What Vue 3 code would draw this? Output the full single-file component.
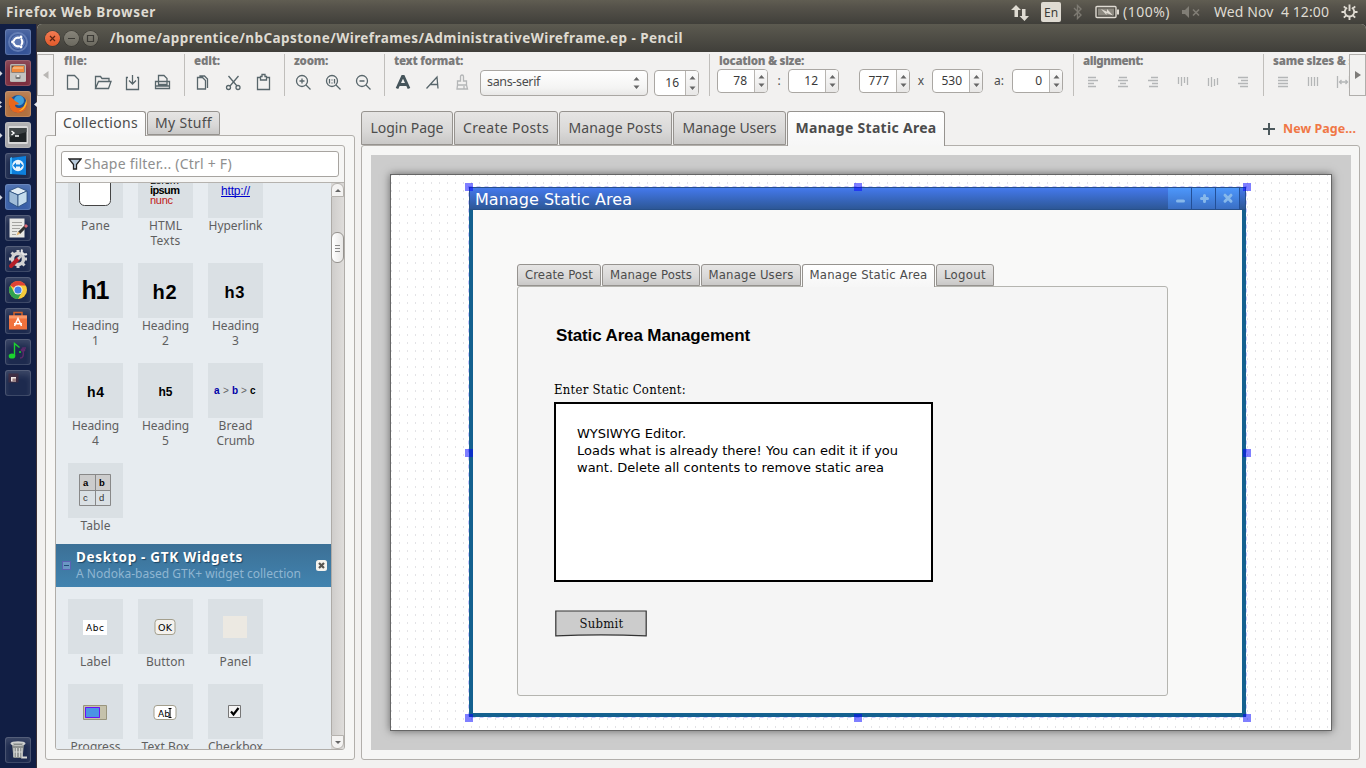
<script setup>
const vFit = {
  mounted(el, { value }) {
    if (!value) return
    const n = el.textContent.length
    if (n < 2) return
    const w = el.getBoundingClientRect().width
    el.style.letterSpacing = ((value - w) / n).toFixed(3) + 'px'
  },
}

const pageTabs = [
  { t: 'Login Page', w: 92, f: 73 },
  { t: 'Create Posts', w: 104, f: 86 },
  { t: 'Manage Posts', w: 113, f: 94 },
  { t: 'Manage Users', w: 113, f: 94 },
  { t: 'Manage Static Area', w: 158, f: 141, on: true },
]
const wireTabs = [
  { t: 'Create Post', w: 84, f: 68 },
  { t: 'Manage Posts', w: 98, f: 82 },
  { t: 'Manage Users', w: 100, f: 85 },
  { t: 'Manage Static Area', w: 133, f: 118, on: true },
  { t: 'Logout', w: 58, f: 42 },
]
const shapesA = [
  { k: 'pane', l: [['Pane', 29]] },
  { k: 'html', l: [['HTML', 33], ['Texts', 30]] },
  { k: 'link', l: [['Hyperlink', 54]] },
  { k: 'h', t: 'h1', s: 25, y: 36, w: 28, l: [['Heading', 47], ['1']] },
  { k: 'h', t: 'h2', s: 20, y: 36, w: 24, x: 26.5, l: [['Heading', 47], ['2']] },
  { k: 'h', t: 'h3', s: 16.5, y: 35, w: 20, x: 26.5, l: [['Heading', 47], ['3']] },
  { k: 'h', t: 'h4', s: 14, y: 34, w: 17, l: [['Heading', 47], ['4']] },
  { k: 'h', t: 'h5', s: 12, y: 33, w: 14, l: [['Heading', 47], ['5']] },
  { k: 'crumb', l: [['Bread', 34], ['Crumb', 38]] },
  { k: 'table', l: [['Table', 30]] },
]
const shapesB = [
  { k: 'label', l: [['Label', 31]] },
  { k: 'button', l: [['Button', 39]] },
  { k: 'panel', l: [['Panel', 32]] },
  { k: 'progress', l: [['Progress', 50]] },
  { k: 'textbox', l: [['Text Box', 48]] },
  { k: 'checkbox', l: [['Checkbox', 55]] },
]
const sections = [
  { id: 'a', items: shapesA },
  { id: 'b', items: shapesB },
]
const apps = [
  { k: 'dash', c: 'blue' },
  { k: 'files', c: 'red', run: 1 },
  { k: 'firefox', c: 'orange', run: 2, focus: true },
  { k: 'term', c: 'grey', run: 1 },
  { k: 'viewer', c: 'dark' },
  { k: 'cube', c: 'mid', run: 1 },
  { k: 'edit', c: 'dark' },
  { k: 'tools', c: 'dark' },
  { k: 'chrome', c: 'dark' },
  { k: 'store', c: 'dark' },
  { k: 'music', c: 'dark' },
  { k: 'space', c: 'dark' },
]
const fileIcons = [
  'M4.500 3.500h7l4 4v9.500h-11z',
  'M2.500 16.500V4.500h5l1.500 2h7v3M2.500 16.500l3-7h12.500l-2.500 7z',
  'M5 5.500H3.500v12h12v-12H14M9.500 3v8.500M6 8.500l3.500 3.500 3.500-3.500',
  'M5.500 9V3.500h5.500l3 3V9M5.500 9.500H2.500v7h14v-7h-2.500M5.500 9.500h8.500v3h-8.500zM2.500 14h14',
]
const editIcons = [
  'M4.500 5.500h5l3 3v8.500h-8zM7 5V4h4.500l3 3v9',
  'M5.500 4l8.500 10M15.500 4l-8.500 10M3.500 15.500a2 2 0 1 0 4 0a2 2 0 1 0-4 0M13 15.500a2 2 0 1 0 4 0a2 2 0 1 0-4 0',
  'M7 5.500H4.500v12h12v-12H14M7.500 8V4.500h1.500v-2h3v2h1.500V8z',
]
const alignIcons = [
  'M5 5.500h8M5 8.500h10M5 11.500h6M5 14.500h8',
  'M6 5.500h8M5 8.500h10M7 11.500h6M5 14.500h10',
  'M8 5.500h7M5 8.500h10M9 11.500h6M6 14.500h9',
  'M5.500 5v7M8.500 5v9M11.500 5v6M14.500 5v8',
  'M5.500 6v8M8.500 5v10M11.500 7v7M14.500 6v7',
  'M5 5.500h10M8 8.500h7M5 11.500h10M7 14.500h8',
]
</script>

<template>
  <div class="screen">
    <header class="menubar">
      <b v-fit="150">Firefox Web Browser</b>
      <svg class="net" width="18" height="18" viewBox="0 0 18 18"><path fill="#dfdbd2" d="M5 1l5 5H7v7H3.500V6H0zM13.500 17l-5-5H11V5h3.500v7H18z" /></svg>
      <span class="lang"><i v-fit="14">En</i></span>
      <svg class="bt" width="10" height="16" viewBox="0 0 10 16"><path fill="none" stroke="#7d7a72" stroke-width="1.400" d="M1 4l7 7-3.500 3.500v-13L8 5 1 12" /></svg>
      <svg class="bat" width="25" height="14" viewBox="0 0 25 14">
        <rect x="1" y="1.500" width="20" height="11" rx="1" fill="none" stroke="#dfdbd2" stroke-width="1.400" />
        <path fill="#8c8980" d="M3 3.500h16v7H3z" /><path fill="#dfdbd2" d="M22 4.500h2v5h-2zM6 4l6 2.800V4l6 6.500-6.500-2.500v2z" />
      </svg>
      <span class="pct" v-fit="47">(100%)</span>
      <svg class="vol" width="18" height="12" viewBox="0 0 18 12"><path fill="#817e76" d="M0 4h3l4-4v12L3 8H0z" /><path stroke="#817e76" stroke-width="1.600" d="M11 3.500l6 6M17 3.500l-6 6" /></svg>
      <span class="clock" v-fit="115">Wed Nov&nbsp; 4 12:00</span>
      <svg class="gear" width="17" height="18" viewBox="-9 -9 18 18">
        <path fill="none" stroke="#dfdbd2" stroke-width="2" d="M-2.500-4.500A5 5 0 1 0 2.500-4.500M0-8v7" />
        <path stroke="#dfdbd2" stroke-width="2" d="M5 0h3.500M-5 0h-3.500M0 5v3.500M3.500 3.500l2.500 2.500M-3.500 3.500L-6 6M3.800-3.800L6-6M-3.800-3.800L-6-6" />
      </svg>
    </header>

    <div class="desk">
      <nav class="launcher">
        <div v-for="a in apps" :key="a.k" class="app" :class="a.c">
          <svg v-if="a.run" class="run" width="3" height="7"><path v-if="a.run === 1" fill="#d5d9e2" d="M0 1l2.500 2.500L0 6z" /><path v-else fill="#d5d9e2" d="M0 0l2 1.500L0 3zM0 4l2 1.500L0 7z" /></svg>
          <svg v-if="a.focus" class="focus" width="3" height="7"><path fill="#e6e8ee" d="M3 1L0 3.500 3 6z" /></svg>
          <svg width="26" height="26" viewBox="0 0 26 26">
            <g v-if="a.k === 'dash'" fill="none">
              <circle cx="13" cy="13" r="9" stroke="#7d95c6" stroke-width="2" opacity=".6" /><circle cx="13" cy="13" r="7" fill="#5d78b3" />
              <circle cx="13" cy="13" r="4.300" stroke="#fff" stroke-width="2.200" />
              <path stroke="#5d78b3" stroke-width="1.200" d="M13 13L6 13M13 13l4-6M13 13l4 6" /><g fill="#fff"><circle cx="7.500" cy="13" r="1.400" /><circle cx="16" cy="8" r="1.400" /><circle cx="16" cy="18" r="1.400" /></g>
            </g>
            <g v-else-if="a.k === 'files'">
              <rect x="5" y="4" width="16" height="18" rx="1.500" fill="#b9b7b3" /><path fill="#6a4a3a" d="M6.500 5.500h13v7h-13z" /><path fill="#f08a3c" d="M7 8l2-2h10v6H7z" /><path fill="#f8d7a8" d="M8 7.500h10v1H8z" /><path fill="#c4c3c0" d="M5 13h16v8H5z" /><rect x="10.500" y="15" width="5" height="4" rx="1" fill="#777" /><path fill="#e8e8e6" d="M11.500 15h3v2h-3z" />
            </g>
            <g v-else-if="a.k === 'firefox'">
              <circle cx="13" cy="13" r="9" fill="#1b5298" /><circle cx="14" cy="9.500" r="5" fill="#3f9fd8" /><path fill="#e9661c" d="M5 6C2 13 5 22 13 22c6 0 10-5 9-12-2 5-4 7-8 7-3 0-4-2-4-3l4-1c-1-2-3-2-5-4 0-1-2-2-4-3z" /><path fill="#f9b82b" d="M21.500 8c1 6-2 12-8 12 3-1 6-4 8-12z" />
            </g>
            <g v-else-if="a.k === 'term'">
              <rect x="3" y="4" width="20" height="18" rx="1.500" fill="#d8d8d8" /><path fill="#1f2426" d="M4.500 6h17v14h-17z" /><path fill="#3e4446" d="M4.500 6h17v4l-17 5z" /><path fill="none" stroke="#fff" stroke-width="1.400" d="M6.500 9l2.500 2-2.500 2M10 14h4" />
            </g>
            <g v-else-if="a.k === 'viewer'">
              <path fill="#0d7fdc" d="M5 5l16-2v19L5 21z" /><path fill="#41b2f7" d="M5 5l2-1v17H5z" /><circle cx="13" cy="12.500" r="5.800" fill="#e9f4fc" /><path fill="#0d7fdc" d="M8 12.500l3-3v2h4v-2l3 3-3 3v-2h-4v2z" />
            </g>
            <g v-else-if="a.k === 'cube'" stroke="#264a78" stroke-width=".8">
              <path fill="#e2edf5" d="M4 7l9-4 9 4-9 4z" /><path fill="#9fbcd8" d="M4 7l9 4v12l-9-5z" /><path fill="#c4dced" d="M22 7l-9 4v12l9-5z" />
            </g>
            <g v-else-if="a.k === 'edit'">
              <path fill="#e9e9e5" d="M4.500 3.500h15v19h-15z" /><path stroke="#a4a4a0" d="M7 7.500h10M7 10.500h10M7 13.500h8M7 16.500h5M7 19.500h4" /><path stroke="#333" stroke-width="3" d="M21 11l-7 7" /><path fill="#e3b26c" d="M15.500 18.500L11.500 20.500l1.500-4z" /><path stroke="#dc6a76" stroke-width="3" d="M20 12l2-2" />
            </g>
            <g v-else-if="a.k === 'tools'">
              <circle cx="13" cy="13" r="5.500" fill="none" stroke="#d2d2d2" stroke-width="3.500" /><path stroke="#d2d2d2" stroke-width="3" d="M13 4v3M13 19v3M4 13h3M19 13h3M6.500 6.500l2 2M17.500 17.500l2 2" /><path stroke="#b51f28" stroke-width="4" stroke-linecap="round" d="M6 20l7-7" /><path stroke="#c8c8c8" stroke-width="2.500" d="M13 13l6-6" /><path fill="none" stroke="#e6e6e6" stroke-width="2" d="M17 3.500c-1 4 1 6 5 4.500" />
            </g>
            <g v-else-if="a.k === 'chrome'">
              <circle cx="13" cy="13" r="9" fill="#f7cb3b" /><path fill="#e04335" d="M13 13L5.200 8.500A9 9 0 0 1 20.800 8.500H13z" /><path fill="#31a350" d="M5.200 8.500A9 9 0 0 0 13 22l4-7-8 0z" /><circle cx="13" cy="13" r="4.500" fill="#f4f4f4" /><circle cx="13" cy="13" r="3.500" fill="#437fe8" />
            </g>
            <g v-else-if="a.k === 'store'">
              <path fill="none" stroke="#d46229" stroke-width="1.500" d="M9 9V4.500h8V9" /><path fill="#f1713c" d="M4 7.500h18v14H4z" /><path fill="#f99768" d="M4 7.500h18v3H4z" /><path fill="none" stroke="#fff" stroke-width="1.500" d="M9.500 18L13 10.500l3.500 7.500M9 15.800h8" />
            </g>
            <g v-else-if="a.k === 'music'">
              <path fill="none" stroke="#1bd32f" stroke-width="1.400" d="M9.500 17V4.500l5 4" /><ellipse cx="7" cy="17" rx="3.300" ry="2.600" fill="#1bd32f" /><path fill="none" stroke="#5b2a69" stroke-width="1.500" d="M15 19c3 0 4-2 3-8V9h3" /><ellipse cx="18" cy="11" rx="2.500" ry="1.800" fill="#5b2a69" /><circle cx="15" cy="13" r="1" fill="#1bd32f" />
            </g>
            <g v-else>
              <path fill="#4a2b3a" d="M3.500 3.500h10v9h-10z" opacity=".7" /><path fill="#f1e8e6" d="M6 7h5v4.500H6z" /><path fill="#9b7f80" d="M7.500 8.500H11v3H7.500z" />
            </g>
          </svg>
        </div>
        <div class="app dark trash">
          <svg width="26" height="26" viewBox="0 0 26 26"><path fill="#8d918f" d="M7 8h12l-1.500 13h-9z" /><ellipse cx="13" cy="6.500" rx="7.500" ry="2.300" fill="#cfd1cf" /><path fill="#858a88" d="M8 6.500h10l-1 1.500H9z" /><path stroke="#d5d7d5" stroke-width="1.200" d="M9 11v9M11.500 11v9M14.500 11v9M17 11v9M8.500 15h9" /><path fill="#d8d8d5" d="M17 19.500h5V21.500h-6z" /></svg>
        </div>
      </nav>

      <main class="win">
        <div class="title">
          <span class="wb close"><svg width="15" height="15"><path stroke="#5b2413" stroke-width="1.200" d="M5 5l5 5M10 5l-5 5" /></svg></span>
          <span class="wb"><svg width="15" height="15"><path stroke="#3b3a35" stroke-width="1.200" d="M4 7.500h7" /></svg></span>
          <span class="wb"><svg width="15" height="15"><path fill="none" stroke="#3b3a35" stroke-width="1.200" d="M4.500 4.500h6v6h-6z" /></svg></span>
          <b v-fit="573">/home/apprentice/nbCapstone/Wireframes/AdministrativeWireframe.ep - Pencil</b>
        </div>

        <div class="toolbar">
          <div class="scroller"><svg width="6" height="8"><path fill="#b9b7b4" d="M5.500 0v8L0 4z" /></svg></div>
          <section class="grp g-file">
            <h6><b v-fit="23">file:</b></h6>
            <div class="tools"><svg v-for="d in fileIcons" :key="d" class="ic" viewBox="0 0 20 20"><path :d="d" /></svg></div>
          </section>
          <section class="grp g3">
            <h6><b v-fit="26">edit:</b></h6>
            <div class="tools"><svg v-for="d in editIcons" :key="d" class="ic" viewBox="0 0 20 20"><path :d="d" /></svg></div>
          </section>
          <section class="grp g3">
            <h6><b v-fit="34">zoom:</b></h6>
            <div class="tools">
              <svg class="ic" viewBox="0 0 20 20"><circle cx="9" cy="9" r="5.500" /><path d="M13 13l4.500 4.500M6.500 9h5M9 6.500v5" /></svg>
              <svg class="ic" viewBox="0 0 20 20"><circle cx="9" cy="9" r="5.500" /><path d="M13 13l4.500 4.500M6.500 7v4.500M11.500 7v4.500M9 7.500v1M9 10.500v1" /></svg>
              <svg class="ic" viewBox="0 0 20 20"><circle cx="9" cy="9" r="5.500" /><path d="M13 13l4.500 4.500M6.500 9h5" /></svg>
            </div>
          </section>
          <section class="grp g-text">
            <h6><b v-fit="69">text format:</b></h6>
            <div class="tools">
              <svg class="ic" viewBox="0 0 20 20"><path class="heavy" d="M4 16.500L9.500 4.500h1L16 16.500M6.500 12.500h7" /></svg>
              <svg class="ic" viewBox="0 0 20 20"><path d="M3.500 16.500L14 5l1 11.500M7 12.500h7.500" /></svg>
              <svg class="ic off" viewBox="0 0 20 20"><path d="M7.500 9V4.500a1.500 1.500 0 0 1 3 0V9h3v4h-9V9zM4.500 13l-.500 4h10.500l-1-4M11 14v3" /></svg>
              <div class="combo"><span v-fit="53">sans-serif</span><svg width="7" height="12"><path fill="#666" d="M3.500 0l3 3.500h-6zM3.500 12l3-3.500h-6z" /></svg></div>
              <div class="spin tall"><span>16</span><i><svg width="7" height="14"><path fill="#666" d="M3.500 0l3 3.500h-6zM3.500 14l3-3.500h-6z" /></svg></i></div>
            </div>
          </section>
          <section class="grp g-loc">
            <h6><b v-fit="85">location &amp; size:</b></h6>
            <div class="tools loc">
              <template v-for="(p, i) in [['78', ':'], ['12', ''], ['777', 'x'], ['530', 'a:'], ['0', '']]" :key="i">
                <div class="spin"><span>{{ p[0] }}</span><i><svg width="7" height="12"><path fill="#666" d="M3.500 0l3 3.500h-6zM3.500 12l3-3.500h-6z" /></svg></i></div>
                <span class="sep" :class="'s' + i">{{ p[1] }}</span>
              </template>
            </div>
          </section>
          <section class="grp g-align">
            <h6><b v-fit="60">alignment:</b></h6>
            <div class="tools"><svg v-for="d in alignIcons" :key="d" class="ic off" viewBox="0 0 20 20"><path :d="d" /></svg></div>
          </section>
          <section class="grp g-same">
            <h6><b v-fit="117">same sizes &amp; spaces:</b></h6>
            <div class="tools">
              <svg class="ic off" viewBox="0 0 20 20"><path d="M5 5.500h10M5 8.500h10M5 11.500h10M5 14.500h10" /></svg>
              <svg class="ic off" viewBox="0 0 20 20"><path d="M5.500 5v9M8.500 5v9M11.500 5v9M14.500 5v9" /></svg>
              <svg class="ic off" viewBox="0 0 20 20"><path d="M4.500 4v12M16.500 4v12M6.500 10h8M8.500 8l-2 2 2 2M12.500 8l2 2-2 2" /></svg>
            </div>
          </section>
          <div class="scroller right"><svg width="6" height="8"><path fill="#7e7c79" d="M0 0v8l6-4z" /></svg></div>
        </div>

        <div class="work">
          <aside class="side">
            <div class="tabs st"><div class="tab on"><span v-fit="75">Collections</span></div><div class="tab"><span v-fit="57">My Stuff</span></div></div>
            <div class="panel">
              <div class="lib">
                <div class="search">
                  <svg width="14" height="13" viewBox="0 0 14 13"><path fill="#b9cbdc" stroke="#222" stroke-width="1.300" d="M1 1h12L8.500 6.500V11h-3V6.500z" /></svg>
                  <span v-fit="148">Shape filter... (Ctrl + F)</span>
                </div>
                <div class="scroll">
                  <div class="list">
                    <template v-for="s in sections" :key="s.id">
                      <div v-if="s.id === 'b'" class="head">
                        <svg width="9" height="9"><rect x=".5" y=".5" width="8" height="8" fill="#6a96c4" stroke="#5a62b4" /><path stroke="#1f4f78" d="M2 4.500h5" /></svg>
                        <div><b v-fit="167">Desktop - GTK Widgets</b><small v-fit="225">A Nodoka-based GTK+ widget collection</small></div>
                        <svg width="11" height="11"><rect width="11" height="11" rx="2.500" fill="#f5f3ee" /><path stroke="#565450" stroke-width="2.200" d="M3 3l5 5M8 3L3 8" /></svg>
                      </div>
                      <div class="grid" :class="s.id">
                        <div v-for="(it, i) in s.items" :key="i" class="shape">
                          <svg class="thumb" width="55" height="55" viewBox="0 0 55 55" font-family="Liberation Sans, Arial, sans-serif">
                            <text v-if="it.k === 'h'" :x="it.x || 27.5" :y="it.y" :font-size="it.s" :textLength="it.w" font-weight="700" text-anchor="middle">{{ it.t }}</text>
                            <rect v-else-if="it.k === 'pane'" x="11.500" y="11.500" width="31" height="31" rx="5" fill="#fff" stroke="#444" />
                            <g v-else-if="it.k === 'html'" font-size="11"><text x="12" y="21" textLength="29">Lorem</text><text x="12" y="31" font-weight="700" textLength="30">ipsum</text><text x="12" y="41" fill="#c01818" textLength="23">nunc</text></g>
                            <g v-else-if="it.k === 'link'"><text x="13" y="32" font-size="12" fill="#00c" textLength="29">http://</text><path stroke="#00c" d="M13 33.500h29" /></g>
                            <g v-else-if="it.k === 'crumb'" font-size="10" font-weight="700"><text x="6" y="31" fill="#0000a8">a</text><text x="15" y="31" font-weight="400" fill="#666">&gt;</text><text x="24" y="31" fill="#0000a8">b</text><text x="33" y="31" font-weight="400" fill="#666">&gt;</text><text x="42" y="31">c</text></g>
                            <g v-else-if="it.k === 'table'" font-size="9.500"><path fill="#ccc" d="M11 11h32v16H11z" /><path fill="none" stroke="#888" d="M11.500 11.500h31v31h-31zM27.500 11v32M11 27.500h32" /><g font-weight="700"><text x="15" y="23">a</text><text x="31" y="23">b</text></g><g fill="#333"><text x="15" y="38">c</text><text x="31" y="38">d</text></g></g>
                            <g v-else-if="it.k === 'label'"><path fill="#fff" d="M15 21h24v15H15z" /><text x="18" y="32" font-size="9" font-family="DejaVu Sans, sans-serif" textLength="18">Abc</text></g>
                            <g v-else-if="it.k === 'button'"><rect x="17" y="20.500" width="20" height="15" rx="3" fill="#f4f2ee" stroke="#a39f8d" /><text x="20" y="31.500" font-size="9.500" font-family="DejaVu Sans, sans-serif" textLength="14">OK</text></g>
                            <path v-else-if="it.k === 'panel'" fill="#ece9e2" d="M15 17h24v22H15z" />
                            <g v-else-if="it.k === 'progress'"><path fill="#c5c2ab" stroke="#99957d" d="M15.500 21.500h23v14h-23z" /><path fill="#4a93e4" d="M17 23h15v11H17z" /><path fill="none" stroke="#6a0ff5" d="M17.500 23.500h14v10h-14z" /></g>
                            <g v-else-if="it.k === 'textbox'"><rect x="16" y="21.500" width="22" height="14" rx="3" fill="#fff" stroke="#a39f8d" /><text x="20" y="32.500" font-size="9" font-family="DejaVu Sans, sans-serif" textLength="12">Ab</text><path stroke="#000" fill="none" d="M30.500 24.500h3M32 25v8M30.500 33.500h3" /></g>
                            <g v-else><path fill="#f4f4f4" stroke="#777" d="M20.500 21.500h12v12h-12z" /><path fill="none" stroke="#000" stroke-width="2.200" d="M23 27.500l2.500 3 5-6.500" /></g>
                          </svg>
                          <span v-for="x in it.l" :key="x[0]" class="cap"><i v-fit="x[1]">{{ x[0] }}</i></span>
                        </div>
                      </div>
                    </template>
                  </div>
                  <div class="bar">
                    <span class="arrow up"><svg width="6" height="3"><path fill="#666" d="M3 0l3 3H0z" /></svg></span>
                    <span class="track"><span class="knob"><svg width="5" height="8"><path stroke="#888" d="M0 1.500h5M0 4.500h5M0 7.500h5" /></svg></span></span>
                    <span class="arrow"><svg width="6" height="3"><path fill="#666" d="M3 3l3-3H0z" /></svg></span>
                  </div>
                </div>
              </div>
            </div>
          </aside>

          <section class="doc">
            <div class="tabs dt">
              <div v-for="t in pageTabs" :key="t.t" class="tab" :class="{ on: t.on }" :style="{ width: t.w + 'px' }"><span v-fit="t.f">{{ t.t }}</span></div>
              <div class="new"><svg width="12" height="12"><path stroke="#4c585c" stroke-width="2" d="M6 0v12M0 6h12" /></svg><b v-fit="73">New Page...</b></div>
            </div>
            <div class="panel">
              <div class="canvas">
                <div class="page">
                  <svg class="dots" width="940" height="555">
                    <defs><pattern id="dot" width="8" height="8" patternUnits="userSpaceOnUse"><path fill="#e3e3e6" d="M0 7h1v1H0zM0 0h1v1H0z" /></pattern></defs>
                    <rect width="940" height="555" fill="url(#dot)" />
                  </svg>
                  <div class="frame">
                    <div class="ftitle">
                      <span v-fit="157">Manage Static Area</span>
                      <em><svg width="23" height="21"><path stroke="#87b8ea" stroke-width="3" stroke-linecap="round" d="M9.500 13h6" /></svg></em>
                      <em><svg width="23" height="21"><path stroke="#87b8ea" stroke-width="3" stroke-linecap="round" d="M9.500 10.500h6M12.500 7.500v6" /></svg></em>
                      <em><svg width="23" height="21"><path stroke="#87b8ea" stroke-width="3" stroke-linecap="round" d="M9 7.200l6 6M15 7.200l-6 6" /></svg></em>
                    </div>
                    <div class="fbody">
                      <div class="tabs wt"><div v-for="t in wireTabs" :key="t.t" class="tab" :class="{ on: t.on }" :style="{ width: t.w + 'px' }"><span v-fit="t.f">{{ t.t }}</span></div></div>
                      <div class="form">
                        <h2><span v-fit="194">Static Area Management</span></h2>
                        <label><span v-fit="132">Enter Static Content:</span></label>
                        <div class="editor">
                          <p><span v-fit="109">WYSIWYG Editor.</span></p>
                          <p><span v-fit="321">Loads what is already there! You can edit it if you</span></p>
                          <p><span v-fit="307">want. Delete all contents to remove static area</span></p>
                        </div>
                        <button><svg class="outline" width="93" height="27"><path fill="#ccc" stroke="#333" stroke-width="1.200" d="M.800 1h90.400v24.800Q46 23.800.800 25.800z" /></svg><span v-fit="44">Submit</span></button>
                      </div>
                    </div>
                    <svg class="handles" width="787" height="540">
                      <path fill="none" stroke="#c9c9ff" stroke-dasharray="4 4" d="M4.500 4.500h778v531H4.500z" />
                      <path fill="#00f" fill-opacity=".5" d="M1 1h8v8H1zM390 1h8v8h-8zM779 1h8v8h-8zM1 267h8v8H1zM779 267h8v8h-8zM1 532h8v8H1zM390 532h8v8h-8zM779 532h8v8h-8z" />
                    </svg>
                  </div>
                </div>
              </div>
            </div>
          </section>
        </div>
      </main>
    </div>
  </div>
</template>

<style>
html, body { margin: 0; overflow: hidden; }
</style>

<style scoped>
.screen { width: 1366px; height: 768px; overflow: hidden; display: flex; flex-direction: column; background: #3c3b37; color: #4c4c4c; font-family: "Noto Sans", sans-serif; font-size: 14px; cursor: default; }
.screen * { box-sizing: border-box; }
svg { display: block; flex: none; }
span, b, i, small { white-space: nowrap; }
i { font-style: normal; }
[class] > span, b, i { display: inline-block; }
.menubar { height: 24px; flex: none; display: flex; align-items: center; padding: 0 8px 0 6px; color: #dfdbd2; background: linear-gradient(#605d52, #55524a 30%, #403f3a); }
.menubar b { font-size: 13.500px; }
.pct, .clock { padding-bottom: 2px; }
.net { margin: 2px 12px 0 auto; }
.lang { width: 20px; height: 20px; background: #dfdbd2; border-radius: 2px; color: #3c3b37; text-align: center; line-height: 21px; font-size: 12px; }
.bt { margin-left: 12px; }
.bat { margin-left: 12px; }
.pct { margin-left: 3px; }
.vol { margin-left: 12px; }
.clock { margin-left: 14px; }
.gear { margin-left: 12px; }
.desk { flex: 1; display: flex; min-height: 0; }
.launcher { width: 37px; flex: none; padding: 5px 0 5px 5px; display: flex; flex-direction: column; gap: 5px; background: #111e44; border-right: 1px solid #3b3036; }
.app { position: relative; width: 26px; height: 26px; border-radius: 3px; box-shadow: inset 0 0 0 1px rgba(255,255,255,.14), inset 0 5px 6px rgba(255,255,255,.14); }
.blue { background: #355396; } .red { background: #7c2f3f; } .orange { background: #b1703f; } .grey { background: #a8a8aa; } .mid { background: #3960a8; } .dark { background: #1d2a4e; }
.trash { margin-top: auto; }
.run { position: absolute; left: -5px; top: 10px; }
.focus { position: absolute; left: 29px; top: 10px; }
.win { flex: 1; min-width: 0; display: flex; flex-direction: column; background: #f2f1f0; border-radius: 5px 5px 0 0; overflow: hidden; }
.title { height: 28px; flex: none; display: flex; align-items: center; padding-left: 8px; gap: 4px; color: #dfdbd2; background: linear-gradient(#5c5a50, #403f3a); }
.title b { margin-left: 8px; font-size: 13.500px; }
.wb { width: 15px; height: 15px; border-radius: 50%; background: linear-gradient(#87847a, #6b695f); box-shadow: 0 0 0 .5px #35342f; }
.close { background: linear-gradient(#f37b53, #e25a2a); }
.toolbar { height: 59px; flex: none; display: flex; align-items: flex-start; padding-top: 2px; position: relative; }
.scroller { width: 17px; height: 42px; flex: none; border: 1px solid #b0aeab; display: flex; align-items: center; justify-content: center; background: #f2f1f0; }
.scroller.right { position: absolute; right: 0; top: 2px; }
.grp { height: 42px; flex: none; border-left: 1px solid #c0bebb; overflow: visible; }
.g-file { width: 130px; border: 0; padding-left: 1px; }
.g3 { width: 100px; }
.g-text { width: 325px; }
.g-loc { width: 364px; }
.g-align { width: 190px; }
.g-same { width: 86px; overflow: hidden; }
h6 { margin: 0 0 0 9px; height: 14px; font-size: 11.500px; line-height: 14px; color: #7a7a7a; white-space: nowrap; }
.tools { height: 27px; margin-left: 3px; display: flex; align-items: center; }
.ic { width: 20px; height: 20px; margin: 0 5px; fill: none; stroke: #58666b; stroke-width: 1.300; }
.g-align .ic, .g-same .ic { position: relative; left: .5px; }
.ic.off { stroke: #b4b6b7; }
.heavy { stroke: #46555b; stroke-width: 2.800; }
.combo { width: 168px; height: 26px; margin: 2px 0 0 2px; border: 1px solid #aaa7a3; border-radius: 4px; background: linear-gradient(#fff, #f4f4f3 70%, #e9e8e7); display: flex; align-items: center; justify-content: space-between; padding: 0 7px 0 6px; font-size: 12.500px; }
.combo span { padding-bottom: 2px; }
.spin { width: 51px; height: 24px; flex: none; display: flex; border: 1px solid #aaa7a3; border-radius: 4px; background: #fff; overflow: hidden; font-size: 12px; color: #3a3a3a; }
.spin span { flex: 1; text-align: right; padding-right: 7px; line-height: 21px; }
.spin i { width: 13px; border-left: 1px solid #b8b5b1; display: flex; align-items: center; justify-content: center; background: linear-gradient(#fbfbfb, #e8e7e6); }
.spin.tall { width: 45px; height: 26px; margin: 2px 0 0 6px; }
.spin.tall span { line-height: 23px; padding-right: 6px; }
.loc { margin-left: 7px; margin-top: -1px; padding-top: 0; }
.loc .spin { margin-top: 1px; }
.sep { text-align: center; font-size: 12px; flex: none; }
.s0 { width: 20px; padding-left: 2px; } .s1 { width: 20px; } .s2 { width: 22px; } .s3 { width: 29px; padding-left: 3px; }
.work { flex: 1; display: flex; padding: 0 6px 8px 8px; gap: 6px; min-height: 0; }
.side { width: 310px; flex: none; display: flex; flex-direction: column; }
.doc { flex: 1; display: flex; flex-direction: column; min-width: 0; }
.tabs { display: flex; flex: none; align-items: flex-start; position: relative; }
.tab { border: 1px solid #96938f; border-radius: 3px 3px 0 0; background: linear-gradient(#e6e5e4, #d9d8d7 60%, #c9c8c7); text-align: center; display: flex; justify-content: center; align-items: center; flex: none; padding-bottom: 2px; }
.tab.on { border-bottom: 0; background: linear-gradient(#fff, #f6f6f6); padding-bottom: 4px; }
.st { height: 24px; margin-left: 10px; gap: 1px; }
.st .tab { width: 73px; height: 24px; }
.st .tab.on { width: 91px; height: 25px; }
.dt { height: 34px; gap: 1px; }
.dt .tab { height: 34px; }
.dt .tab.on { height: 35px; font-weight: 700; }
.new { margin: 11px 4px 0 auto; display: flex; align-items: center; gap: 8px; color: #f07746; font-size: 12.500px; line-height: 13px; }
.panel { flex: 1; min-height: 0; border: 1px solid #b2afab; border-radius: 3px; background: #f6f6f5; padding: 9px; }
.doc > .panel { padding-right: 8px; }
.lib { height: 100%; border: 1px solid #b0ada9; border-radius: 3px; display: flex; flex-direction: column; overflow: hidden; }
.search { height: 26px; flex: none; margin: 5px; border: 1px solid #a7a4a0; border-radius: 3px; background: #fff; display: flex; align-items: center; gap: 2px; padding-left: 6px; color: #8e8e8e; }
.search span { padding-bottom: 2px; }
.scroll { flex: 1; min-height: 0; border-top: 1px solid #b5b2ae; display: flex; }
.list { flex: 1; background: #e7ecf0; overflow: hidden; }
.grid { display: grid; grid-template-columns: repeat(3, 55px); column-gap: 15px; row-gap: 15px; padding-left: 12px; align-content: start; }
.grid.a { height: 381px; margin-top: -20px; }
.grid.b { padding-top: 12px; }
.shape { width: 55px; }
.thumb { background: #dae0e4; }
.cap { display: block !important; height: 15px; line-height: 15px; font-size: 12px; text-align: center; color: #5f5f5f; }
.head { height: 43px; display: flex; align-items: center; padding: 0 4px 0 6px; background: linear-gradient(#3c7096, #4183af); }
.head > div { flex: 1; padding-left: 5px; display: flex; flex-direction: column; align-items: flex-start; }
.head b { color: #fff; font-size: 13.500px; line-height: 17px; text-shadow: 1px 1px 1px #1c4564; }
.head small { color: #8fb6d2; font-size: 12px; line-height: 16px; }
.bar { width: 13px; flex: none; display: flex; flex-direction: column; background: #d9d7d5; }
.arrow { height: 14px; width: 13px; display: flex !important; align-items: center; justify-content: center; border: 1px solid #b5b2ae; border-radius: 0 0 6px 6px; background: #f4f3f2; }
.arrow.up { border-radius: 6px 6px 0 0; }
.track { flex: 1; display: block !important; border-left: 1px solid #aeaba7; padding-top: 35px; background: linear-gradient(90deg, #cfcdcb, #dfdddb); }
.knob { width: 13px; height: 31px; margin-left: -1px; border: 1px solid #96938f; border-radius: 6px; background: linear-gradient(90deg, #fff, #e8e7e6); display: flex !important; align-items: center; justify-content: center; }
.canvas { height: 100%; background: #ccc; padding: 19px 0 0 19px; }
.page { position: relative; width: 942px; height: 557px; border: 1px solid #666; background: #fff; box-shadow: 0 0 8px rgba(0,0,0,.5); }
.dots { position: absolute; inset: 0; }
.frame { position: relative; width: 777px; height: 530px; margin: 12px 0 0 78px; display: flex; flex-direction: column; }
.ftitle { height: 23px; flex: none; display: flex; border: 1px solid #27508a; padding-left: 5px; padding-right: 5px; color: #fff; font: 16px/23px "DejaVu Sans", sans-serif; background: linear-gradient(#4479ec, #2d5796); }
.ftitle span { margin-right: auto; }
.ftitle em { width: 24px; height: 21px; border-right: 1px solid #234f96; background: linear-gradient(#4d97fb, #3a6fc4); }
.fbody { flex: 1; border: 4px solid #14618f; border-top: 0; background: #f9f9f8; padding: 54px 0 0 44px; }
.wt { height: 22px; gap: 1px; font: 13px "DejaVu Sans Condensed", "DejaVu Sans", sans-serif; }
.wt .tab { height: 22px; padding-bottom: 1px; }
.wt .tab.on { height: 23px; padding-bottom: 3px; }
.form { width: 651px; height: 410px; border: 1px solid #b5b5b0; border-radius: 3px; background: #f5f5f5; padding: 39px 0 0 36px; color: #000; }
h2 { margin: 0 0 0 2px; height: 47px; font: 700 17px/20px "Liberation Sans", Arial, sans-serif; }
label { display: block; height: 29px; font: 13px/34px "DejaVu Serif Condensed", "DejaVu Serif", serif; }
.editor { width: 379px; height: 180px; border: 2px solid #000; background: #fff; padding: 21px; font: 13px/17px "DejaVu Sans", sans-serif; }
.editor p { margin: 0; }
button { position: relative; display: block; width: 93px; height: 27px; margin: 28px 0 0 1px; padding: 0; border: 0; background: none; color: #111; font: 13px/27px "DejaVu Serif Condensed", "DejaVu Serif", serif; }
button span { position: relative; }
.outline { position: absolute; left: 0; top: 0; }
.handles { position: absolute; left: -5px; top: -5px; }
</style>
